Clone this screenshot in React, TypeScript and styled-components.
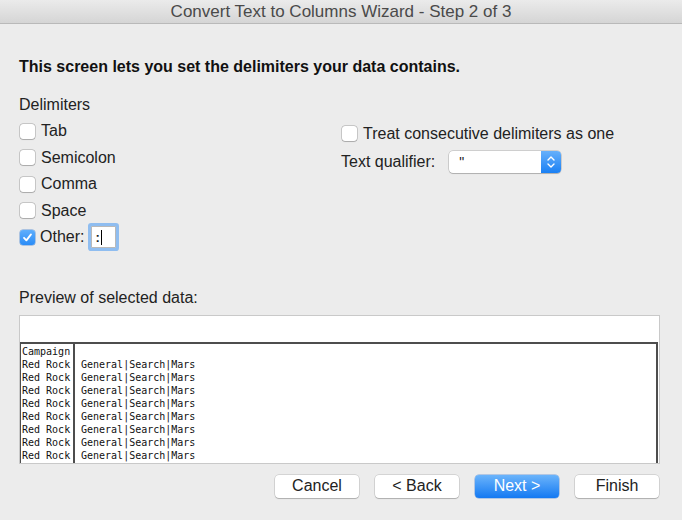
import styled, { createGlobalStyle } from 'styled-components';

const GlobalStyle = createGlobalStyle`
  html, body {
    margin: 0;
    padding: 0;
    background: #ececec;
  }
  * {
    box-sizing: border-box;
  }
`;

const Window = styled.div`
  width: 682px;
  height: 520px;
  display: flex;
  flex-direction: column;
  background: #ececec;
  font-family: 'Liberation Sans', Arial, sans-serif;
  color: #1e1e1e;
  overflow: hidden;
`;

const TitleBar = styled.div`
  height: 24px;
  display: flex;
  align-items: center;
  justify-content: center;
  background: linear-gradient(#ebebeb, #d5d5d5);
  border-bottom: 1px solid #b9b9b9;
  font-size: 17px;
  color: #4a4a4a;
`;

const Content = styled.div`
  flex: 1;
  display: flex;
  flex-direction: column;
  padding: 0 22px 0 19px;
`;

const Heading = styled.div`
  margin-top: 33px;
  font-size: 16px;
  line-height: 19px;
  font-weight: 700;
  color: #111;
`;

const Label = styled.div<{ $top: number }>`
  margin-top: ${(p) => p.$top}px;
  font-size: 16px;
  line-height: 19px;
  color: #222;
`;

const Options = styled.div`
  display: flex;
  margin-top: 4px;
`;

const LeftColumn = styled.div`
  width: 322px;
  display: flex;
  flex-direction: column;
`;

const RightColumn = styled.div`
  display: flex;
  flex-direction: column;
  padding-top: 2px;
`;

const CheckRow = styled.div<{ $h: number; $gap?: number }>`
  height: ${(p) => p.$h}px;
  display: flex;
  align-items: center;
  gap: ${(p) => p.$gap ?? 6}px;
  padding-left: 1px;
  font-size: 16px;
  color: #222;
`;

const Box = styled.span<{ $checked?: boolean }>`
  width: 15px;
  height: 15px;
  border-radius: 3px;
  display: inline-flex;
  align-items: center;
  justify-content: center;
  flex-shrink: 0;
  background: ${(p) => (p.$checked ? 'linear-gradient(#5eaefc, #2a8cf7)' : '#fff')};
  box-shadow: ${(p) =>
    p.$checked
      ? '0 0 0 0.5px rgba(20, 100, 200, 0.6)'
      : '0 0 0 0.5px rgba(0, 0, 0, 0.3), 0 0.5px 1px rgba(0, 0, 0, 0.15)'};
`;

const OtherInput = styled.span`
  margin-left: 2px;
  width: 25px;
  height: 22px;
  background: #fff;
  border: 1px solid #b9b9b9;
  box-shadow: 0 0 0 3px #8fbdf0;
  border-radius: 1px;
  display: inline-flex;
  align-items: center;
  padding-left: 3px;
  font-size: 13px;
  font-weight: 700;
`;

const Caret = styled.span`
  width: 1px;
  height: 15px;
  background: #000;
  margin-left: 1px;
`;

const QualifierRow = styled.div`
  display: flex;
  align-items: center;
  height: 30px;
  font-size: 16px;
  color: #222;
`;

const Select = styled.div`
  margin-left: 14px;
  width: 112px;
  height: 22px;
  display: flex;
  background: #fff;
  border-radius: 4px;
  box-shadow: 0 0 0 0.5px rgba(0, 0, 0, 0.25), 0 1px 1px rgba(0, 0, 0, 0.15);
  overflow: hidden;
`;

const SelectValue = styled.span`
  flex: 1;
  padding-left: 10px;
  font-size: 14px;
  line-height: 22px;
`;

const Stepper = styled.span`
  width: 20px;
  display: flex;
  align-items: center;
  justify-content: center;
  background: linear-gradient(#66b0fb, #1a80f4);
`;

const Preview = styled.div`
  margin-top: 8px;
  height: 149px;
  display: flex;
  flex-direction: column;
  background: #fff;
  border: 1px solid #c9c9c9;
  overflow: hidden;
`;

const PreviewTop = styled.div`
  height: 26px;
  flex-shrink: 0;
`;

const Grid = styled.div`
  flex: 1;
  display: grid;
  grid-template-columns: 54px 1fr;
  border-top: 2px solid #4d4d4d;
  border-left: 1px solid #4d4d4d;
  border-right: 2px solid #4d4d4d;
  margin-right: 1px;
  overflow: hidden;
`;

const Column = styled.div<{ $divider?: boolean }>`
  display: flex;
  flex-direction: column;
  padding: 1px 0 0 ${(p) => (p.$divider ? 6 : 1)}px;
  border-right: ${(p) => (p.$divider ? 'none' : '2px solid #4d4d4d')};
  font-family: 'DejaVu Sans Mono', 'Liberation Mono', monospace;
  font-size: 10px;
  color: #111;
  white-space: pre;
`;

const Cell = styled.span`
  height: 13px;
  line-height: 13px;
`;

const Footer = styled.div`
  margin-top: 11px;
  display: flex;
  justify-content: flex-end;
  gap: 16px;
  padding-right: 1px;
`;

const Button = styled.button<{ $primary?: boolean }>`
  width: 84px;
  height: 23px;
  border: none;
  border-radius: 4px;
  font-family: 'Liberation Sans', Arial, sans-serif;
  font-size: 16px;
  padding: 0;
  color: ${(p) => (p.$primary ? '#fff' : '#222')};
  background: ${(p) => (p.$primary ? 'linear-gradient(#6bb4fb, #1479f2)' : '#fff')};
  box-shadow: ${(p) =>
    p.$primary
      ? '0 0 0 0.5px rgba(10, 90, 200, 0.5)'
      : '0 0 0 0.5px rgba(0, 0, 0, 0.2), 0 1px 1px rgba(0, 0, 0, 0.18)'};
`;

const Check = () => (
  <svg width="11" height="11" viewBox="0 0 11 11">
    <path d="M2 5.8 L4.4 8.4 L9 2.4" fill="none" stroke="#fff" strokeWidth="1.8" strokeLinecap="round" strokeLinejoin="round" />
  </svg>
);

const Arrows = () => (
  <svg width="10" height="16" viewBox="0 0 10 16">
    <path d="M2 6 L5 3 L8 6 M2 10 L5 13 L8 10" fill="none" stroke="#fff" strokeWidth="1.4" strokeLinecap="round" strokeLinejoin="round" />
  </svg>
);

const delimiters = ['Tab', 'Semicolon', 'Comma', 'Space'];
const rows = Array.from({ length: 8 });

export default function App() {
  return (
    <>
      <GlobalStyle />
      <Window>
        <TitleBar>Convert Text to Columns Wizard - Step 2 of 3</TitleBar>
        <Content>
          <Heading>This screen lets you set the delimiters your data contains.</Heading>
          <Label $top={19}>Delimiters</Label>
          <Options>
            <LeftColumn>
              {delimiters.map((d) => (
                <CheckRow key={d} $h={26.5}>
                  <Box />
                  {d}
                </CheckRow>
              ))}
              <CheckRow $h={26.5} $gap={5}>
                <Box $checked>
                  <Check />
                </Box>
                Other:
                <OtherInput>
                  :<Caret />
                </OtherInput>
              </CheckRow>
            </LeftColumn>
            <RightColumn>
              <CheckRow $h={27}>
                <Box />
                Treat consecutive delimiters as one
              </CheckRow>
              <QualifierRow>
                Text qualifier:
                <Select>
                  <SelectValue>"</SelectValue>
                  <Stepper>
                    <Arrows />
                  </Stepper>
                </Select>
              </QualifierRow>
            </RightColumn>
          </Options>
          <Label $top={37}>Preview of selected data:</Label>
          <Preview>
            <PreviewTop />
            <Grid>
              <Column>
                <Cell>Campaign</Cell>
                {rows.map((_, i) => (
                  <Cell key={i}>Red Rock</Cell>
                ))}
              </Column>
              <Column $divider>
                <Cell />
                {rows.map((_, i) => (
                  <Cell key={i}>General|Search|Mars</Cell>
                ))}
              </Column>
            </Grid>
          </Preview>
          <Footer>
            <Button>Cancel</Button>
            <Button>&lt; Back</Button>
            <Button $primary>Next &gt;</Button>
            <Button>Finish</Button>
          </Footer>
        </Content>
      </Window>
    </>
  );
}
